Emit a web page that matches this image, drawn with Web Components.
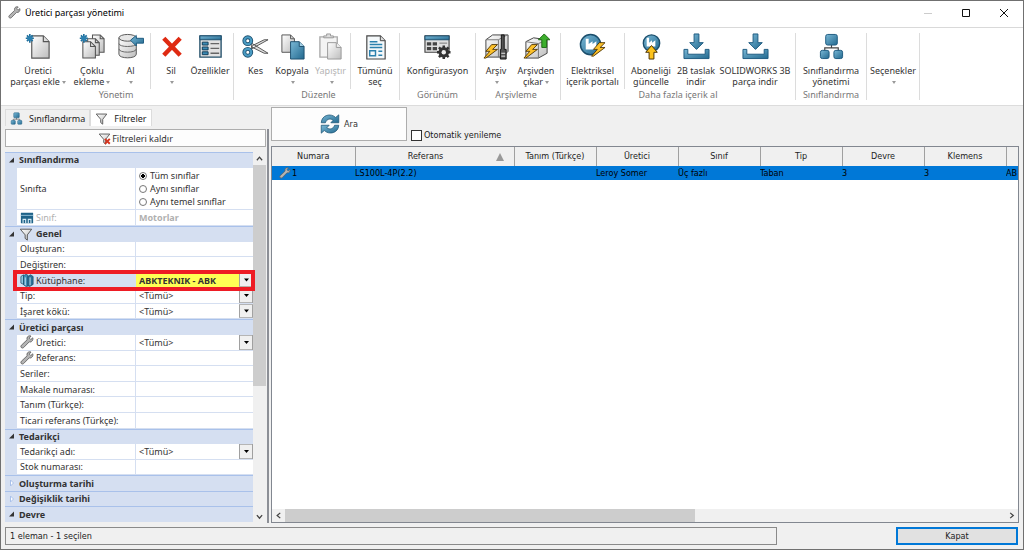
<!DOCTYPE html>
<html lang="tr">
<head>
<meta charset="utf-8">
<title>Üretici parçası yönetimi</title>
<style>
  html, body { margin: 0; height: 100%; }
  body { font: 9px/11px "Noto Sans", "Open Sans", sans-serif; color: #222; }
</style>
</head>
<body>
<part-manager></part-manager>

<script>
const BLUE = '<defs><linearGradient id="b" x1="0" y1="0" x2="1" y2="1"><stop offset="0" stop-color="#7ab8d6"/><stop offset="1" stop-color="#22698f"/></linearGradient><linearGradient id="g" x1="0" y1="0" x2="1" y2="1"><stop offset="0" stop-color="#fff"/><stop offset="1" stop-color="#bdbdbd"/></linearGradient></defs>';
const BOLT = (x, y) => `<path transform="translate(${x} ${y})" d="M8 0L2 7h4L0 14l2 0L14 5H9l5-5z" fill="#fbc02a" stroke="#4a3000" stroke-width=".9" stroke-linejoin="round"/>`;
const STAR = '<path d="M5 1v9M.8 5.500h8.400M2 2.500l6 6M8 2.500l-6 6" stroke="#1f6f9c" stroke-width="1.700"/><circle cx="5" cy="5.500" r="2.600" fill="#2b80b0"/>';
const DOWNLOAD = '<path d="M11.500 1h5v9h4.500l-7 7-7-7h4.500z" fill="url(#b)" stroke="#1d5b80"/><path d="M1 17h4v5h18v-5h4v9.500H1z" fill="url(#b)" stroke="#1d5b80"/>';
const FACTORY = '<path d="M7 17V6h3v5.500l4-3v3l4-3V17z" fill="#fff"/>';
const FUNNEL = '<path d="M1.500 2.500h13L9.500 9v6L7 13V9z" fill="url(#g)" stroke="#555" stroke-width="1.100" stroke-linejoin="round"/>';
const ICONS = {
  wrench: ['0 0 16 16', '<path d="M14.600 3.200l-2.300 2-1.700-1.700 2-2.300c-2-.8-4.300.2-4.600 2.300-.1.700 0 1.300.2 1.900L1.500 11.800c-1.600 1.700.9 4.200 2.600 2.600l6.500-6.600c2.600.9 4.800-1.900 4-4.600z" fill="#b4b4b4" stroke="#606060" stroke-width="1"/>'],
  newPart: ['0 0 28 28', `<path d="M7 3h12l6 6v17H7z" fill="url(#g)" stroke="#555" stroke-width="1.200"/><path d="M19 3v6h6" fill="#ddd" stroke="#555" stroke-width="1.200"/>${STAR}`],
  multi: ['0 0 28 28', `<g fill="url(#g)" stroke="#555" stroke-width="1.100"><path d="M14 2h8l4 4v14H14z"/><path d="M9 6h8l4 4v13H9z"/><path d="M4 9h8l5 5v12H4z"/><path d="M12 9v5h5M17 6v4h4M22 2v4h4" fill="none"/></g>${STAR}`],
  import: ['0 0 28 28', '<path d="M2 5v17c0 5 18 5 18 0V5z" fill="url(#g)" stroke="#555"/><ellipse cx="11" cy="5" rx="9" ry="3.500" fill="#e6e6e6" stroke="#555"/><path d="M2 11c0 4 18 4 18 0M2 16.500c0 4.500 18 4.500 18 0" fill="none" stroke="#666"/><path d="M14 7.500l6-5v3h7.500v5H20v3z" fill="url(#b)" stroke="#1d5b80"/>'],
  delete: ['0 0 28 28', '<path d="M6 5.500L23 23M23 5.500L6 23" stroke="#df2a12" stroke-width="4.600"/>'],
  props: ['0 0 28 28', '<path d="M3 3h22v22H3z" fill="#e2e2e2" stroke="#24506a" stroke-width="1.400"/><path d="M3 3h22v4H3z" fill="url(#b)" stroke="#1d4f6e"/><g fill="#3c8bb5" stroke="#123c56"><path d="M5.500 9.500h6v3h-6zM5.500 14.500h6v3h-6zM5.500 19.500h6v3h-6z"/></g><path d="M14 11h9M14 16h9M14 21h9" stroke="#666" stroke-width="1.300"/>'],
  cut: ['0 0 28 28', '<path d="M9 17L27 7h-4L11 13zM9 10l18 11h-4L10 14.500z" fill="#ddd" stroke="#444" stroke-width=".9"/><g fill="none"><g stroke="#1d4f6e" stroke-width="4"><circle cx="6" cy="8" r="3.600"/><circle cx="6" cy="20" r="3.600"/></g><g stroke="#4a9cc4" stroke-width="2.200"><circle cx="6" cy="8" r="3.600"/><circle cx="6" cy="20" r="3.600"/></g></g>'],
  copy: ['0 0 28 28', '<path d="M3 2h9l4 4v14H3z" fill="url(#g)" stroke="#555"/><path d="M12 2v4h4" fill="none" stroke="#555"/><path d="M12 9h9l5 5v13H12z" fill="url(#b)" stroke="#1d4f6e"/><path d="M21 9v5h5" fill="#a5d1e6" stroke="#1d4f6e"/>'],
  paste: ['0 0 28 28', '<path d="M3 4h18v21H3z" fill="#f4f4f4" stroke="#aaa" stroke-width="1.400"/><path d="M7 5V3h3V1h4v2h3v2z" fill="#ddd" stroke="#999"/><path d="M11 10h9l5 5v12H11z" fill="url(#g)" stroke="#999"/><path d="M20 10v5h5" fill="#eee" stroke="#999"/>'],
  selectAll: ['0 0 28 28', '<path d="M5 3h14l5 5v19H5z" fill="#f4f8fa" stroke="#444" stroke-width="1.200"/><path d="M19 3v5h5" fill="#ddd" stroke="#444"/><path d="M8 9h8M8 12h13M8 15h13M17 19h4M17 23h4M8 18.500h6v5H8z" stroke="#2b80ad" stroke-width="1.500" fill="none"/>'],
  config: ['0 0 28 28', '<path d="M1 3h25v17H1z" fill="#e0e0e0" stroke="#444" stroke-width="1.200"/><path d="M1 3h25v4H1z" fill="url(#b)" stroke="#1d4f6e"/><g fill="#444"><path d="M3 9.500h4.500V13H3zM9 9.500h4.500V13H9zM3 14.500h4.500V18H3zM9 14.500h4.500V18H9z"/></g><path d="M16 10.500h8" stroke="#777"/><path d="M20.500 13v14M13.500 20h14M15.500 15l10 10M25.500 15l-10 10" stroke="#333" stroke-width="2.600"/><circle cx="20.500" cy="20" r="4" fill="none" stroke="#333" stroke-width="3"/><circle cx="20.500" cy="20" r="2.300" fill="#eee"/>'],
  archive: ['0 0 28 28', `<path d="M3 7l7-5h16v17l-6 6H3z" fill="url(#g)" stroke="#444"/><path d="M3 7h13v18M16 7l9-5" fill="none" stroke="#777"/><path d="M19 2h3v15h2v10h-6V17h1z" fill="#555" stroke="#111"/><path d="M19 21h4M19 24h4" stroke="#eee"/>${BOLT(1, 12)}`],
  unarchive: ['0 0 28 28', `<path d="M3 9l8-4 14 2v14l-9 5H3z" fill="url(#g)" stroke="#444"/><path d="M3 9l13 2v15M16 11l9-4" fill="none" stroke="#777"/><path d="M19.500 15V7H16l6-6 6 6h-3.500v8z" fill="#3cae2c" stroke="#1d6a14"/>${BOLT(1, 12)}`],
  portal: ['0 0 28 28', `<circle cx="12" cy="12" r="10.500" fill="url(#b)" stroke="#1b4e6c" stroke-width="1.500"/>${FACTORY}${BOLT(13, 10)}`],
  subscribe: ['0 0 28 28', `<circle cx="14" cy="10.500" r="8.500" fill="url(#b)" stroke="#1b4e6c" stroke-width="1.400"/><path d="M9 14V5h2.500v5l3-2.500v2.500l3.500-2.500V14z" fill="#fff"/><path d="M11.500 27v-7H8l6-7 6 7h-3.500v7z" fill="#fcc21c" stroke="#4a3000"/>`],
  download: ['0 0 28 28', DOWNLOAD],
  tree: ['0 0 28 28', '<path d="M14 12v4M7 19v-3.500h14V19" fill="none" stroke="#444" stroke-width="1.200"/><g fill="url(#b)" stroke="#1d5b80"><rect x="8" y="1.500" width="12" height="11" rx="2"/><rect x="2.500" y="18" width="9" height="8.500" rx="2"/><rect x="16.500" y="18" width="9" height="8.500" rx="2"/></g>'],
  funnel: ['0 0 16 16', FUNNEL],
  funnelClear: ['0 0 16 16', FUNNEL + '<path d="M8.500 8.500l6 6M14.500 8.500l-6 6" stroke="#d5351f" stroke-width="2.400"/>'],
  klass: ['0 0 16 16', '<path d="M1 2h14v12H1z" fill="#1f6388"/><path d="M1 5h14" stroke="#9cc7dd"/><path d="M3.500 14v-4.500h3V14M9.500 14v-4.500h3V14" fill="none" stroke="#d6eaf4" stroke-width="1.300"/>'],
  books: ['0 0 16 16', '<g stroke="#174b67" stroke-width=".8"><path d="M1 4l3-2v11l-3-1.500z" fill="#8ec6de"/><path d="M4 3l3-1.500 2 1V15l-2 .5-3-2z" fill="#3d8db5"/><path d="M9 4l3-2 3 2v9l-4 2.500-2-1z" fill="#2a7198"/></g><path d="M6 5v9M11.500 5v9" stroke="#d4ebf5"/>'],
  refresh: ['0 0 24 24', '<g fill="url(#b)" stroke="#1c5475" stroke-width=".9" stroke-linejoin="round"><path d="M1.500 10.500C2 1 13-1.500 18.800 4.200L22.500 1v9.500h-9.500l2.800-3C12.500 4.800 8 6 6.500 10.500z"/><path d="M22.500 13.500c-.5 9.500-11.500 12-17.300 6.300L1.500 23v-9.500H11l-2.800 3c3.300 2.700 7.800 1.500 9.300-3z"/></g>'],
};

/* Every element clones its own <template> into an open shadow root. */
class Base extends HTMLElement {
  constructor() {
    super();
    this.attachShadow({ mode: 'open' });
  }
  draw(html) {
    const t = document.createElement('template');
    t.innerHTML = `<style>*{box-sizing:border-box}button,input,select{font:inherit;color:inherit;margin:0;border-radius:0}</style>${html}`;
    this.shadowRoot.replaceChildren(t.content.cloneNode(true));
  }
}

customElements.define('ui-icon', class extends Base {
  connectedCallback() {
    const [box, body] = ICONS[this.getAttribute('name')];
    this.draw(`<style>:host{display:inline-block;flex:none;width:var(--size,16px);height:var(--size,16px)}svg{display:block;width:100%;height:100%}</style>
      <svg viewBox="${box}" aria-hidden="true">${BLUE}${body}</svg>`);
  }
});

customElements.define('title-bar', class extends Base {
  connectedCallback() {
    this.draw(`<style>
      :host{display:flex;flex:none;align-items:center;height:27px;padding-bottom:3px;background:#fff;border-bottom:1px solid #d9d9d9;color:#000}
      ui-icon{--size:13px;margin:0 4px 0 7px}
      h1{flex:1;margin:0;font:inherit}
      button{width:38px;height:22px;padding:0;border:0;background:none;display:grid;place-items:center}
      svg{width:10px;height:10px;fill:none;stroke:#111}
      .off svg{stroke:#ccc}
    </style>
    <ui-icon name="wrench"></ui-icon><h1><slot></slot></h1>
    <button class="off" aria-label="Simge durumuna küçült"><svg viewBox="0 0 10 10"><path d="M1 5.500h8"/></svg></button>
    <button aria-label="Ekranı kapla"><svg viewBox="0 0 10 10"><path d="M1.500 1.500h7v7h-7z"/></svg></button>
    <button aria-label="Kapat"><svg viewBox="0 0 10 10"><path d="M1 1l8 8M9 1l-8 8"/></svg></button>`);
  }
});

customElements.define('ribbon-group', class extends Base {
  connectedCallback() {
    this.draw(`<style>
      :host{display:flex;flex-direction:column;flex:none;border-right:1px solid #dcdcdc;height:67px}
      .items{display:flex;flex:1}
      .caption{height:11px;text-align:center;color:#777}
    </style><div class="items"><slot></slot></div><div class="caption">${this.getAttribute('caption') || ''}</div>`);
  }
});

customElements.define('ribbon-button', class extends Base {
  connectedCallback() {
    const icon = this.getAttribute('icon');
    this.draw(`<style>
      :host{display:block;flex:none;width:var(--w,40px);color:#333}
      :host([disabled]){color:#b4b4b4}
      :host([split]){border-right:1px solid #dcdcdc}
      button{display:flex;flex-direction:column;align-items:center;gap:5px;width:100%;padding:0;border:0;background:none;white-space:nowrap}
      .glyph{height:27px}
      ui-icon{--size:27px}
      .arrow{display:inline-block;vertical-align:middle;margin-left:2px;border:2px solid transparent;border-top:3px solid #999;border-bottom:0}
    </style>
    <button ${this.hasAttribute('disabled') ? 'disabled' : ''}><span class="glyph">${icon ? `<ui-icon name="${icon}"></ui-icon>` : ''}</span>
    <span><slot></slot>${this.hasAttribute('menu') ? '<span class="arrow"></span>' : ''}</span></button>`);
  }
});

customElements.define('app-ribbon', class extends Base {
  connectedCallback() {
    this.draw(`<style>
      :host{display:flex;flex:none;height:78px;padding:5px 0 0 2px;background:#fff;border-bottom:1px solid #dcdcdc;overflow:hidden}
      .w35{--w:35px}.w38{--w:38px}.w40{--w:40px}.w48{--w:48px}.w52{--w:52px}.w64{--w:64px}.w70{--w:70px}.w75{--w:75px}.w80{--w:80px}
      .before{padding-left:4px}.after{padding-right:4px}
    </style>
    <ribbon-group class="after" caption="Yönetim">
      <ribbon-button class="w70" icon="newPart" menu>Üretici<br>parçası ekle</ribbon-button>
      <ribbon-button class="w38" icon="multi" menu>Çoklu<br>ekleme</ribbon-button>
      <ribbon-button class="w40" icon="import" menu split>Al<br></ribbon-button>
      <ribbon-button class="w40" icon="delete" menu>Sil<br></ribbon-button>
      <ribbon-button class="w38" icon="props">Özellikler</ribbon-button>
    </ribbon-group>
    <ribbon-group class="before" caption="Düzenle">
      <ribbon-button class="w35" icon="cut">Kes</ribbon-button>
      <ribbon-button class="w38" icon="copy" menu>Kopyala<br></ribbon-button>
      <ribbon-button class="w40" icon="paste" menu disabled split>Yapıştır<br></ribbon-button>
      <ribbon-button class="w48" icon="selectAll">Tümünü<br>seç</ribbon-button>
    </ribbon-group>
    <ribbon-group caption="Görünüm">
      <ribbon-button class="w75" icon="config">Konfigürasyon</ribbon-button>
    </ribbon-group>
    <ribbon-group class="after" caption="Arşivleme">
      <ribbon-button class="w40" icon="archive" menu>Arşiv<br></ribbon-button>
      <ribbon-button class="w40" icon="unarchive" menu>Arşivden<br>çıkar</ribbon-button>
    </ribbon-group>
    <ribbon-group caption="Daha fazla içerik al">
      <ribbon-button class="w64" icon="portal" split>Elektriksel<br>içerik portalı</ribbon-button>
      <ribbon-button class="w52" icon="subscribe">Aboneliği<br>güncelle</ribbon-button>
      <ribbon-button class="w38" icon="download">2B taslak<br>indir</ribbon-button>
      <ribbon-button class="w80" icon="download">SOLIDWORKS 3B<br>parça indir</ribbon-button>
    </ribbon-group>
    <ribbon-group caption="Sınıflandırma">
      <ribbon-button class="w70" icon="tree">Sınıflandırma<br>yönetimi</ribbon-button>
    </ribbon-group>
    <ribbon-group>
      <ribbon-button class="w52" menu>Seçenekler<br></ribbon-button>
    </ribbon-group>`);
  }
});

customElements.define('scroll-bar', class extends Base {
  connectedCallback() {
    const v = this.hasAttribute('vertical');
    this.draw(`<style>
      :host{display:flex;flex-direction:${v ? 'column' : 'row'};flex:none;background:#f0f0f0;${v ? 'width:13px' : 'height:13px'}}
      button{flex:none;width:13px;height:13px;padding:0;border:0;background:none;display:grid;place-items:center}
      svg{width:7px;height:7px;fill:none;stroke:#444;stroke-width:1.500}
      .track{flex:1;display:flex;flex-direction:inherit}
      .thumb{background:#cdcdcd;flex:0 0 var(--part,50%)}
    </style>
    <button aria-label="Geri"><svg viewBox="0 0 8 8"><path d="${v ? 'M1 6l3-3.500L7 6' : 'M6 1L2.500 4 6 7'}"/></svg></button>
    <div class="track"><div class="thumb"></div></div>
    <button aria-label="İleri"><svg viewBox="0 0 8 8"><path d="${v ? 'M1 2.500L4 6l3-3.500' : 'M2.500 1L6 4 2.500 7'}"/></svg></button>`);
  }
});

customElements.define('filter-section', class extends Base {
  connectedCallback() {
    const icon = this.getAttribute('icon');
    const open = !this.hasAttribute('closed');
    this.draw(`<style>
      :host{display:flex;align-items:center;flex:1 1 0;min-height:0;background:#d5dff1;box-shadow:inset 0 1px #a9c1ea}
      h2{margin:0;font:inherit;font-weight:700;color:#333}
      svg{flex:none;width:14px;height:8px}
      ui-icon{margin-right:3px;--size:14px}
    </style>
    <svg viewBox="0 0 14 8">${open ? '<path d="M9 1.500v5H4z" fill="#333"/>' : '<path d="M5.500 1l3 3-3 3z" fill="#fff" stroke="#a9c1ea"/>'}</svg>
    ${icon ? `<ui-icon name="${icon}"></ui-icon>` : ''}<h2><slot></slot></h2>`);
  }
});

customElements.define('filter-row', class extends Base {
  connectedCallback() {
    const a = n => this.getAttribute(n);
    const icon = a('icon');
    let field = `<input id="f" type="text" value="${a('value') || ''}" ${this.hasAttribute('disabled') ? 'disabled' : ''}>`;
    if (a('choice')) field = `<select id="f"><option>${a('choice').replace('<', '&lt;')}</option></select>`;
    if (a('radios')) field = a('radios').split('|').map((r, i) =>
      `<label class="radio"><input type="radio" name="r" ${i ? '' : 'checked'}>${r}</label>`).join('');
    const name = a('radios') ? '<span class="name">' : '<label class="name" for="f">';
    this.draw(`<style>
      :host{display:flex;flex:1 1 0;min-height:0;padding-left:12px;background:#d5dff1;color:#333;position:relative}
      :host([radios]){flex-grow:2.75}
      .name{flex:none;display:flex;align-items:center;width:119px;padding-left:3px;background:#fff;border-bottom:1px solid #d5dff1;border-right:1px solid #d5dff1}
      .name ui-icon{margin-right:2px;--size:14px}
      .value{flex:1;min-width:0;display:flex;flex-direction:column;justify-content:center;background:#fff;border-bottom:1px solid #d5dff1}
      input[type=text],select{flex:1;min-height:0;width:100%;padding:0 0 0 3px;border:0;background:none;outline:0;appearance:none}
      select{background:url('data:image/svg+xml,<svg xmlns="http://www.w3.org/2000/svg" width="14" height="15"><path d="M.5.5h13v14H.5z" fill="%23f0f0f0" stroke="%23a0a0a0"/><path d="M5 6h5L7.500 9z" fill="%23000"/></svg>') right center no-repeat}
      .radio{display:flex;align-items:center;gap:3px;height:13px;padding-left:3px}
      .radio input{appearance:none;width:8px;height:8px;border:1px solid #777;border-radius:50%;background:#fff}
      .radio input:checked{background:radial-gradient(circle,#000 2px,#fff 2px)}
      :host([disabled]) .name,:host([disabled]) input{color:#b0b0b0}
      :host([disabled]) input{font-weight:700}
      :host([marked]) .name{background:#d5dff1}
      :host([marked]) .value{background:#ffff54}
      :host([marked]) select{font-weight:700}
      :host([marked])::after{content:"";position:absolute;z-index:1;inset:-3px -2px -3px 8px;border:4px solid #ee1c24;pointer-events:none}
    </style>
    ${name}${icon ? `<ui-icon name="${icon}"></ui-icon>` : ''}<slot></slot>${a('radios') ? '</span>' : '</label>'}<div class="value">${field}</div>`);
  }
});

customElements.define('filter-panel', class extends Base {
  connectedCallback() {
    this.draw(`<style>
      :host{display:flex;flex-direction:column;width:265px;flex:none;padding:3px 0 1px 4px}
      .tabs{display:flex;height:17px}
      .tabs button{display:flex;align-items:center;padding:0 4px;border:1px solid #dcdcdc;border-bottom:0;background:#f0f0f0}
      .tabs ui-icon{--size:13px;margin-right:6px}
      .tabs .on{background:#fff}
      .clear{display:flex;flex:none;align-items:center;justify-content:center;gap:1px;height:18px;margin:3px 0 5px;background:#fdfdfd;border:1px solid #adadad;padding:0;color:#333}
      .clear ui-icon{--size:13px}
      .grid{flex:1;min-height:0;display:flex;overflow:hidden}
      .rows{flex:1;display:flex;flex-direction:column;padding-bottom:1px}
      scroll-bar{--part:64%}
    </style>
    <div class="tabs"><button><ui-icon name="tree"></ui-icon>Sınıflandırma</button><button class="on"><ui-icon name="funnel"></ui-icon>Filtreler</button></div>
    <button class="clear"><ui-icon name="funnelClear"></ui-icon>Filtreleri kaldır</button>
    <div class="grid"><div class="rows">
      <filter-section>Sınıflandırma</filter-section>
      <filter-row radios="Tüm sınıflar|Aynı sınıflar|Aynı temel sınıflar">Sınıfta</filter-row>
      <filter-row icon="klass" value="Motorlar" disabled>Sınıf:</filter-row>
      <filter-section icon="funnel">Genel</filter-section>
      <filter-row>Oluşturan:</filter-row>
      <filter-row>Değiştiren:</filter-row>
      <filter-row icon="books" choice="ABKTEKNIK - ABK" marked>Kütüphane:</filter-row>
      <filter-row choice="<Tümü>">Tip:</filter-row>
      <filter-row choice="<Tümü>">İşaret kökü:</filter-row>
      <filter-section>Üretici parçası</filter-section>
      <filter-row icon="wrench" choice="<Tümü>">Üretici:</filter-row>
      <filter-row icon="wrench">Referans:</filter-row>
      <filter-row>Seriler:</filter-row>
      <filter-row>Makale numarası:</filter-row>
      <filter-row>Tanım (Türkçe):</filter-row>
      <filter-row>Ticari referans (Türkçe):</filter-row>
      <filter-section>Tedarikçi</filter-section>
      <filter-row choice="<Tümü>">Tedarikçi adı:</filter-row>
      <filter-row>Stok numarası:</filter-row>
      <filter-section closed>Oluşturma tarihi</filter-section>
      <filter-section closed>Değişiklik tarihi</filter-section>
      <filter-section>Devre</filter-section>
    </div><scroll-bar vertical></scroll-bar></div>`);
  }
});

customElements.define('result-panel', class extends Base {
  connectedCallback() {
    this.draw(`<style>
      :host{display:flex;flex-direction:column;flex:1;min-width:0;padding:1px 4px 1px 0;font:var(--table-font)}
      .bar{display:flex;flex:none;align-items:flex-end;gap:4px;height:34px;margin-bottom:5px}
      .search{display:flex;align-items:center;justify-content:center;gap:4px;width:136px;height:34px;background:#fdfdfd;border:1px solid #adadad;color:#333}
      .search ui-icon{--size:20px}
      .bar label{display:flex;align-items:center;gap:2px;height:11px}
      .bar input{appearance:none;width:11px;height:11px;border:1px solid #333;background:#fff}
      .frame{flex:1;min-height:0;display:flex;flex-direction:column;background:#fff;border:1px solid #828790}
      .view{flex:1;min-height:0;overflow:hidden}
      table{width:100%;table-layout:fixed;border-collapse:collapse}
      .num{width:83px}.ref{width:159px}.std{width:82px}
      th,td{padding:0;overflow:hidden;white-space:nowrap;font-weight:400}
      th{height:19px;background:#f0f0f0;border-right:1px solid #a0a0a0}
      th:last-child{border-right:0}
      td{height:14px;background:#0078d7;color:#000}
      td ui-icon,.up{vertical-align:middle}
      td ui-icon{--size:12px;margin:0 1px 0 7px}
      .sorted{display:flex;align-items:center;padding:0 10px 0 0}
      .sorted span{flex:1}
      .up{border:4px solid transparent;border-bottom:8px solid #999;border-top:0}
      scroll-bar{--part:57%}
    </style>
    <div class="bar"><button class="search"><ui-icon name="refresh"></ui-icon>Ara</button><label><input type="checkbox">Otomatik yenileme</label></div>
    <div class="frame"><div class="view"><table>
      <colgroup><col class="num"><col class="ref"><col class="std"><col class="std"><col class="std"><col class="std"><col class="std"><col class="std"><col></colgroup>
      <thead><tr><th>Numara</th><th><div class="sorted"><span>Referans</span><i class="up"></i></div></th><th>Tanım (Türkçe)</th><th>Üretici</th><th>Sınıf</th><th>Tip</th><th>Devre</th><th>Klemens</th><th></th></tr></thead>
      <tbody><tr><td><ui-icon name="wrench"></ui-icon>1</td><td>LS100L-4P(2.2)</td><td></td><td>Leroy Somer</td><td>Üç fazlı</td><td>Taban</td><td>3</td><td>3</td><td>AB</td></tr></tbody>
    </table></div><scroll-bar></scroll-bar></div>`);
  }
});

customElements.define('status-bar', class extends Base {
  connectedCallback() {
    this.draw(`<style>
      :host{display:flex;flex:none;padding:3px 5px 4px 4px;gap:119px;font:var(--table-font)}
      .text{flex:1;display:flex;align-items:center;height:18px;padding-left:4px;border:1px solid #8a8a8a}
      button{width:122px;height:18px;padding:0;border:2px solid #0078d7;background:#e1e1e1}
    </style><div class="text"><slot></slot></div><button>Kapat</button>`);
  }
});

customElements.define('part-manager', class extends Base {
  connectedCallback() {
    this.draw(`<style>
      :host{display:flex;flex-direction:column;height:100vh;box-sizing:border-box;border:1px solid #707070;background:#f0f0f0;--table-font:9px/11px "DejaVu Sans Condensed","DejaVu Sans",sans-serif}
      .main{flex:1;min-height:0;display:flex}
      .split{flex:none;width:4px;margin:23px 0 1px 1px;border-left:2px solid #8c8f96}
    </style>
    <title-bar>Üretici parçası yönetimi</title-bar>
    <app-ribbon></app-ribbon>
    <div class="main"><filter-panel></filter-panel><div class="split"></div><result-panel></result-panel></div>
    <status-bar>1 eleman - 1 seçilen</status-bar>`);
  }
});
</script>
</body>
</html>
